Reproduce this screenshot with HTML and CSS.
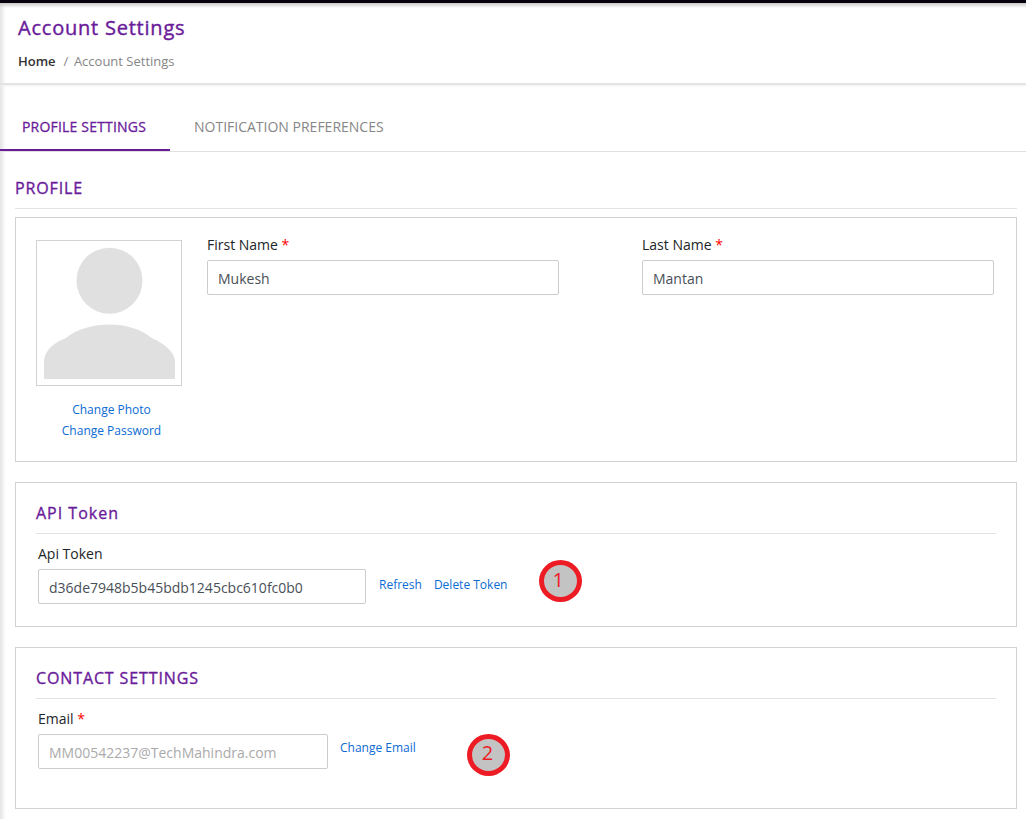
FILE: index.html
```html
<!DOCTYPE html>
<html lang="en">
<head>
<meta charset="utf-8">
<title>Account Settings</title>
<link rel="stylesheet" href="styles.css">
</head>
<body>
<div class="page">
  <header class="page-header">
    <h1 class="page-title">Account Settings</h1>
    <nav class="breadcrumb">
      <a class="crumb-home">Home</a><span class="crumb-sep">/</span><span class="crumb-current">Account Settings</span>
    </nav>
  </header>
  <nav class="tabs">
    <a class="tab tab-active">PROFILE SETTINGS</a>
    <a class="tab">NOTIFICATION PREFERENCES</a>
  </nav>
  <main class="content">
    <h2 class="section-title profile-title">PROFILE</h2>
    <section class="card profile-card">
      <div class="photo-col">
        <div class="photo">
          <svg class="avatar" width="144" height="144" viewBox="0 0 144 144">
            <circle cx="72.5" cy="39.7" r="33" />
            <path d="M7 138V121C7 110 16 102 29 97C40 88 56 83.500 72.500 83.500C89 83.500 104 88 114.500 97C127 102 138 111 138 121V138Z" />
          </svg>
        </div>
        <div class="photo-links">
          <a class="link">Change Photo</a>
          <a class="link">Change Password</a>
        </div>
      </div>
      <div class="field">
        <label class="label">First Name <span class="req">*</span></label>
        <div class="input">Mukesh</div>
      </div>
      <div class="field">
        <label class="label">Last Name <span class="req">*</span></label>
        <div class="input">Mantan</div>
      </div>
    </section>
    <section class="card token-card">
      <h2 class="section-title api-title">API Token</h2>
      <div class="row">
        <div class="field token-field">
          <label class="label">Api Token</label>
          <div class="input">d36de7948b5b45bdb1245cbc610fc0b0</div>
        </div>
        <a class="link refresh">Refresh</a>
        <a class="link delete">Delete Token</a>
        <span class="marker marker-one">1</span>
      </div>
    </section>
    <section class="card contact-card">
      <h2 class="section-title">CONTACT SETTINGS</h2>
      <div class="row">
        <div class="field email-field">
          <label class="label">Email <span class="req">*</span></label>
          <div class="input disabled">MM00542237@TechMahindra.com</div>
        </div>
        <a class="link change-email">Change Email</a>
        <span class="marker marker-two">2</span>
      </div>
    </section>
  </main>
</div>
</body>
</html>
```
FILE: styles.css
```css
* { box-sizing: border-box; }
body {
  margin: 0;
  background: #fff;
  color: #212529;
  font-family: "Open Sans", sans-serif;
  font-size: 14px;
  line-height: 20px;
}
.page {
  height: 819px;
  overflow: hidden;
  border-top: 3px solid #08000c;
  background:
    linear-gradient(to bottom, #c9c9c9, rgba(255, 255, 255, 0) 5px),
    linear-gradient(to right, #e4e4e4, rgba(255, 255, 255, 0) 6px),
    #fff;
}
.page-header {
  height: 82px;
  padding: 11px 18px 0;
  border-bottom: 2px solid #e3e3e3;
  box-shadow: 0 1px 2px #f0f0f0;
}
.page-title {
  margin: 0;
  color: #6a1b9a;
  font-size: 20px;
  font-weight: 400;
  line-height: 28px;
  letter-spacing: 0.78px;
  -webkit-text-stroke: 0.4px #6a1b9a;
}
.breadcrumb {
  display: flex;
  margin-top: 9px;
  font-size: 13px;
  color: #868686;
}
.crumb-home { color: #333; font-weight: 600; }
.crumb-sep { margin: 0 5.5px 0 8px; }
.tabs {
  display: flex;
  height: 67px;
  padding-top: 22px;
  border-bottom: 1px solid #e0e0e0;
}
.tab { height: 44px; padding: 10px 24px 0; color: #868686; }
.tab-active {
  width: 170px;
  padding: 10px 0 0 22px;
  border-bottom: 2px solid #6a1b9a;
  color: #6a1b9a;
  letter-spacing: 0.19px;
  -webkit-text-stroke: 0.3px #6a1b9a;
}
.content { padding: 26px 9px 0 15px; }
.section-title {
  margin: 0 20px 0 0;
  height: 31px;
  border-bottom: 1px solid #e3e3e3;
  color: #6a1b9a;
  font-size: 16px;
  font-weight: 400;
  line-height: 20px;
  letter-spacing: 0.88px;
  -webkit-text-stroke: 0.35px #6a1b9a;
}
.profile-title { margin-right: 0; }
.api-title { letter-spacing: 1px; }
.card { border: 1px solid #d2d2d2; padding: 20px 0 0 20px; }
.profile-card {
  display: flex;
  height: 245px;
  margin-top: 8px;
}
.photo-col { width: 146px; margin: 2px 25px 0 0; }
.photo { height: 146px; border: 1px solid #d2d2d2; }
.avatar { display: block; fill: #e0e0e0; }
.photo-links {
  display: flex;
  flex-direction: column;
  align-items: center;
  margin-top: 13px;
  padding-left: 5px;
}
.link { color: #0b6bd3; font-size: 12px; line-height: 21px; }
.profile-card .field { width: 352px; margin: -3px 83px 0 0; flex: none; }
.profile-card .field:last-child { margin-right: 0; }
.label { display: block; line-height: 20px; margin-bottom: 5px; }
.req { color: #f00; }
.input {
  height: 35px;
  padding: 0 10px;
  border: 1px solid #ccc;
  border-radius: 2px;
  background: #fff;
  color: #495057;
  line-height: 36px;
}
.disabled { color: #aaa; }
.token-card { height: 145px; margin-top: 20px; }
.contact-card { height: 162px; margin-top: 20px; }
.row { display: flex; padding: 10px 0 0 2px; }
.token-field { width: 328px; }
.email-field { width: 290px; }
.refresh { margin: 30px 0 0 13px; }
.delete { margin: 30px 0 0 12px; }
.change-email { margin: 28px 0 0 12px; }
.marker {
  width: 43px;
  height: 42px;
  border: 5px solid #ed1c24;
  border-radius: 50%;
  background: #c3c3c3;
  color: #ed1c24;
  font-size: 20px;
  line-height: 30px;
}
.marker-one { margin: 16px 0 0 32px; padding-left: 8px; }
.marker-two { margin: 25px 0 0 51px; padding-left: 10px; line-height: 28px; }
```
